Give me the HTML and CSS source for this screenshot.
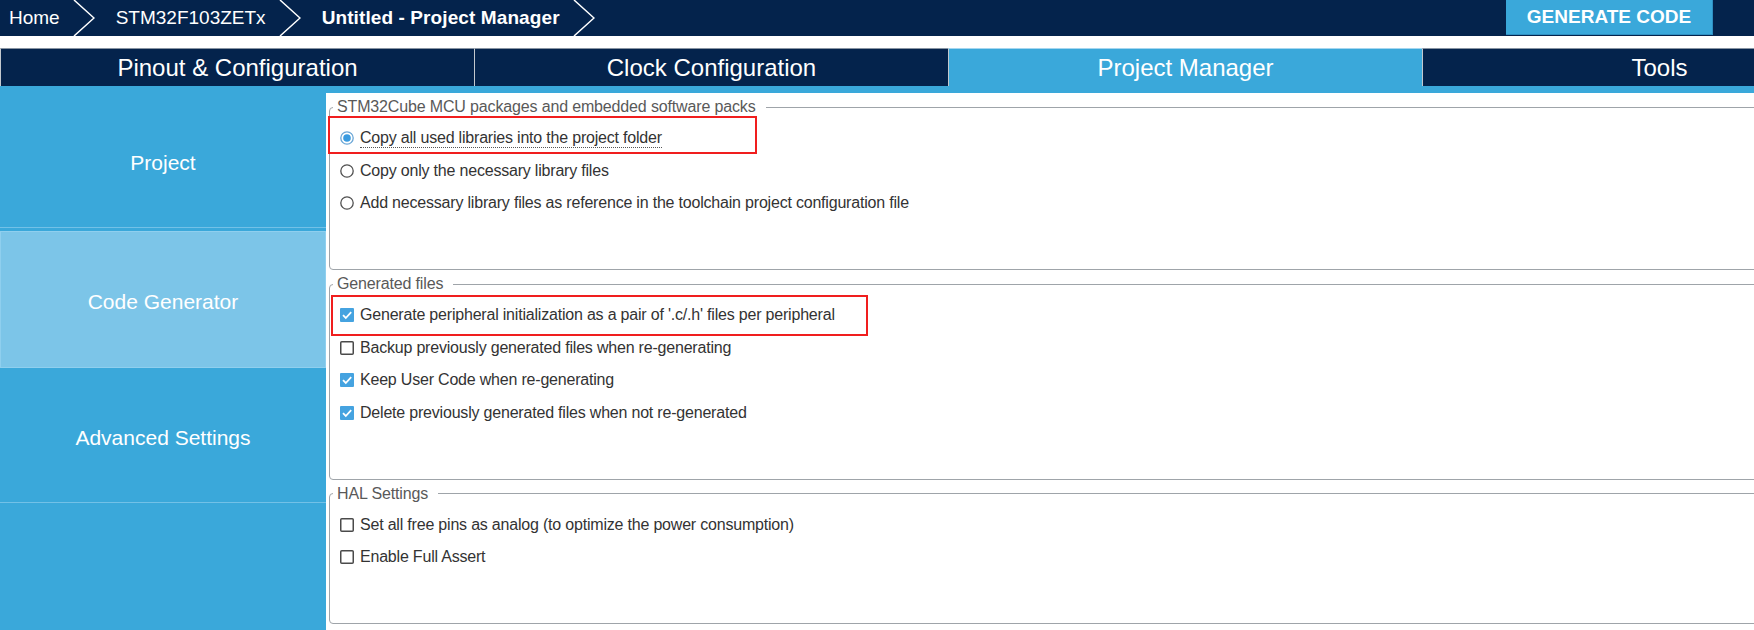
FILE: index.html
```html
<!DOCTYPE html>
<html lang="en">
<head>
    <meta charset="UTF-8">
    <meta name="viewport" content="width=device-width, initial-scale=1.0">
    <title>Untitled - Project Manager</title>
    <link rel="stylesheet" href="styles.css">
</head>
<body>
    <header class="topbar">
        <nav class="crumbs">
            <span class="crumb">Home</span>
            <svg class="chevron" viewBox="0 0 22 36"><polyline points="1,0 21,18 1,36"/></svg>
            <span class="crumb">STM32F103ZETx</span>
            <svg class="chevron" viewBox="0 0 22 36"><polyline points="1,0 21,18 1,36"/></svg>
            <span class="crumb current">Untitled - Project Manager</span>
            <svg class="chevron" viewBox="0 0 22 36"><polyline points="1,0 21,18 1,36"/></svg>
        </nav>
        <button class="generate">GENERATE CODE</button>
    </header>

    <div class="tabs">
        <div class="tab">Pinout &amp; Configuration</div>
        <div class="tab">Clock Configuration</div>
        <div class="tab active">Project Manager</div>
        <div class="tab">Tools</div>
    </div>

    <div class="workspace">
        <aside class="sidebar">
            <div class="nav-item">Project</div>
            <div class="nav-item active">Code Generator</div>
            <div class="nav-item">Advanced Settings</div>
            <div class="nav-item last"></div>
        </aside>

        <main class="content">
            <fieldset class="group">
                <legend>STM32Cube MCU packages and embedded software packs</legend>
                <div class="option">
                    <svg class="radio" viewBox="0 0 14 14"><circle class="ring on" cx="7" cy="7" r="6.2"/><circle class="dot" cx="7" cy="7" r="3.8"/></svg>
                    <span class="focused">Copy all used libraries into the project folder</span>
                    <span class="callout callout-packs"></span>
                </div>
                <div class="option">
                    <svg class="radio" viewBox="0 0 14 14"><circle class="ring" cx="7" cy="7" r="6.2"/></svg>
                    <span>Copy only the necessary library files</span>
                </div>
                <div class="option">
                    <svg class="radio" viewBox="0 0 14 14"><circle class="ring" cx="7" cy="7" r="6.2"/></svg>
                    <span>Add necessary library files as reference in the toolchain project configuration file</span>
                </div>
            </fieldset>

            <fieldset class="group">
                <legend>Generated files</legend>
                <div class="option">
                    <svg class="check on" viewBox="0 0 14 14"><rect x="0" y="0" width="14" height="14" rx="1"/><path d="M3 7.2 L5.8 10 L11.2 4.2"/></svg>
                    <span>Generate peripheral initialization as a pair of '.c/.h' files per peripheral</span>
                    <span class="callout callout-files"></span>
                </div>
                <div class="option">
                    <svg class="check" viewBox="0 0 14 14"><rect x="0.75" y="0.75" width="12.5" height="12.5" rx="1"/></svg>
                    <span>Backup previously generated files when re-generating</span>
                </div>
                <div class="option">
                    <svg class="check on" viewBox="0 0 14 14"><rect x="0" y="0" width="14" height="14" rx="1"/><path d="M3 7.2 L5.8 10 L11.2 4.2"/></svg>
                    <span>Keep User Code when re-generating</span>
                </div>
                <div class="option">
                    <svg class="check on" viewBox="0 0 14 14"><rect x="0" y="0" width="14" height="14" rx="1"/><path d="M3 7.2 L5.8 10 L11.2 4.2"/></svg>
                    <span>Delete previously generated files when not re-generated</span>
                </div>
            </fieldset>

            <fieldset class="group">
                <legend>HAL Settings</legend>
                <div class="option">
                    <svg class="check" viewBox="0 0 14 14"><rect x="0.75" y="0.75" width="12.5" height="12.5" rx="1"/></svg>
                    <span>Set all free pins as analog (to optimize the power consumption)</span>
                </div>
                <div class="option">
                    <svg class="check" viewBox="0 0 14 14"><rect x="0.75" y="0.75" width="12.5" height="12.5" rx="1"/></svg>
                    <span>Enable Full Assert</span>
                </div>
            </fieldset>
        </main>
    </div>
</body>
</html>
```

FILE: styles.css
```css
body {
    margin: 0;
    width: 1754px;
    height: 630px;
    overflow: hidden;
    background-color: white;
    font-family: "Liberation Sans", Arial, sans-serif;
}
.topbar {
    display: flex;
    align-items: flex-start;
    height: 36px;
    background-color: #04234c;
    padding: 0 41px 0 9px;
}
.crumbs {
    display: flex;
    align-items: center;
    height: 36px;
}
.crumb {
    color: white;
    font-size: 19px;
    white-space: nowrap;
}
.crumb.current {
    font-weight: bold;
    letter-spacing: 0.1px;
}
.chevron {
    width: 22px;
    height: 36px;
    margin: 0 21px 0 13px;
}
.chevron polyline {
    fill: none;
    stroke: white;
    stroke-width: 1.5;
}
.generate {
    margin-left: auto;
    width: 207px;
    height: 35px;
    background-color: #3aa8da;
    color: white;
    font-family: "Liberation Sans", Arial, sans-serif;
    font-size: 19px;
    font-weight: bold;
    border: none;
    border-right: 1px solid #2e8fc2;
    border-bottom: 1px solid #2e8fc2;
    padding: 0;
}
.tabs {
    display: flex;
    margin-top: 12px;
    height: 38px;
    overflow: hidden;
}
.tab {
    flex: 0 0 474px;
    box-sizing: border-box;
    display: flex;
    align-items: center;
    justify-content: center;
    background-color: #04234c;
    color: white;
    font-size: 24px;
    white-space: nowrap;
    border-top: 1px solid #8894a2;
    border-left: 1px solid #c3c8ce;
}
.tab.active {
    background-color: #3aa8da;
    border-top-color: #a4d6ef;
}
.workspace {
    display: flex;
    height: 544px;
    padding-top: 7px;
    box-sizing: border-box;
    background-color: #3aa8da;
}
.sidebar {
    flex: 0 0 326px;
    display: flex;
    flex-direction: column;
}
.nav-item {
    box-sizing: border-box;
    height: 135px;
    padding-top: 5px;
    display: flex;
    align-items: center;
    justify-content: center;
    color: white;
    font-size: 21px;
    border-bottom: 1px solid #72c1e7;
}
.nav-item.active {
    height: 137px;
    margin-top: 3px;
    background-color: #7cc5e8;
    border: 1px solid #8fcfee;
}
.nav-item.last {
    flex: 1;
    border-bottom: none;
}
.content {
    flex: 1;
    overflow: hidden;
    background-color: white;
}
.group {
    width: 1480px;
    margin: 5px 0 0 3px;
    padding: 6px 0 49.5px 10px;
    border: 1px solid #9fa4a9;
    border-radius: 4px;
    box-sizing: border-box;
}
.group legend {
    margin-left: -7px;
    padding: 0 10px 0 4px;
    font-size: 16px;
    line-height: 18px;
    letter-spacing: -0.15px;
    color: #595959;
}
.option {
    position: relative;
    display: flex;
    align-items: center;
    gap: 6px;
    height: 32.5px;
    font-size: 16px;
    letter-spacing: -0.2px;
    color: #333;
    white-space: nowrap;
}
.option svg {
    flex: 0 0 14px;
    width: 14px;
    height: 14px;
}
.radio .ring {
    fill: white;
    stroke: #505050;
    stroke-width: 1.3;
}
.radio .ring.on {
    stroke: #6aa6d6;
}
.radio .dot {
    fill: #3a9be0;
}
.check rect {
    fill: white;
    stroke: #4a4a4a;
    stroke-width: 1.5;
}
.check.on rect {
    fill: #45a3e0;
    stroke: none;
}
.check path {
    fill: none;
    stroke: white;
    stroke-width: 1.8;
}
.focused {
    line-height: 18px;
    border-bottom: 1px dotted #555;
}
/* red marker frames drawn over a row */
.callout {
    position: absolute;
    border: 2px solid #f01e1e;
    box-sizing: border-box;
}
.callout-packs {
    left: -12px;
    top: -6px;
    width: 429px;
    height: 38px;
}
.callout-files {
    left: -9px;
    top: -4px;
    width: 537px;
    height: 41px;
}
```
